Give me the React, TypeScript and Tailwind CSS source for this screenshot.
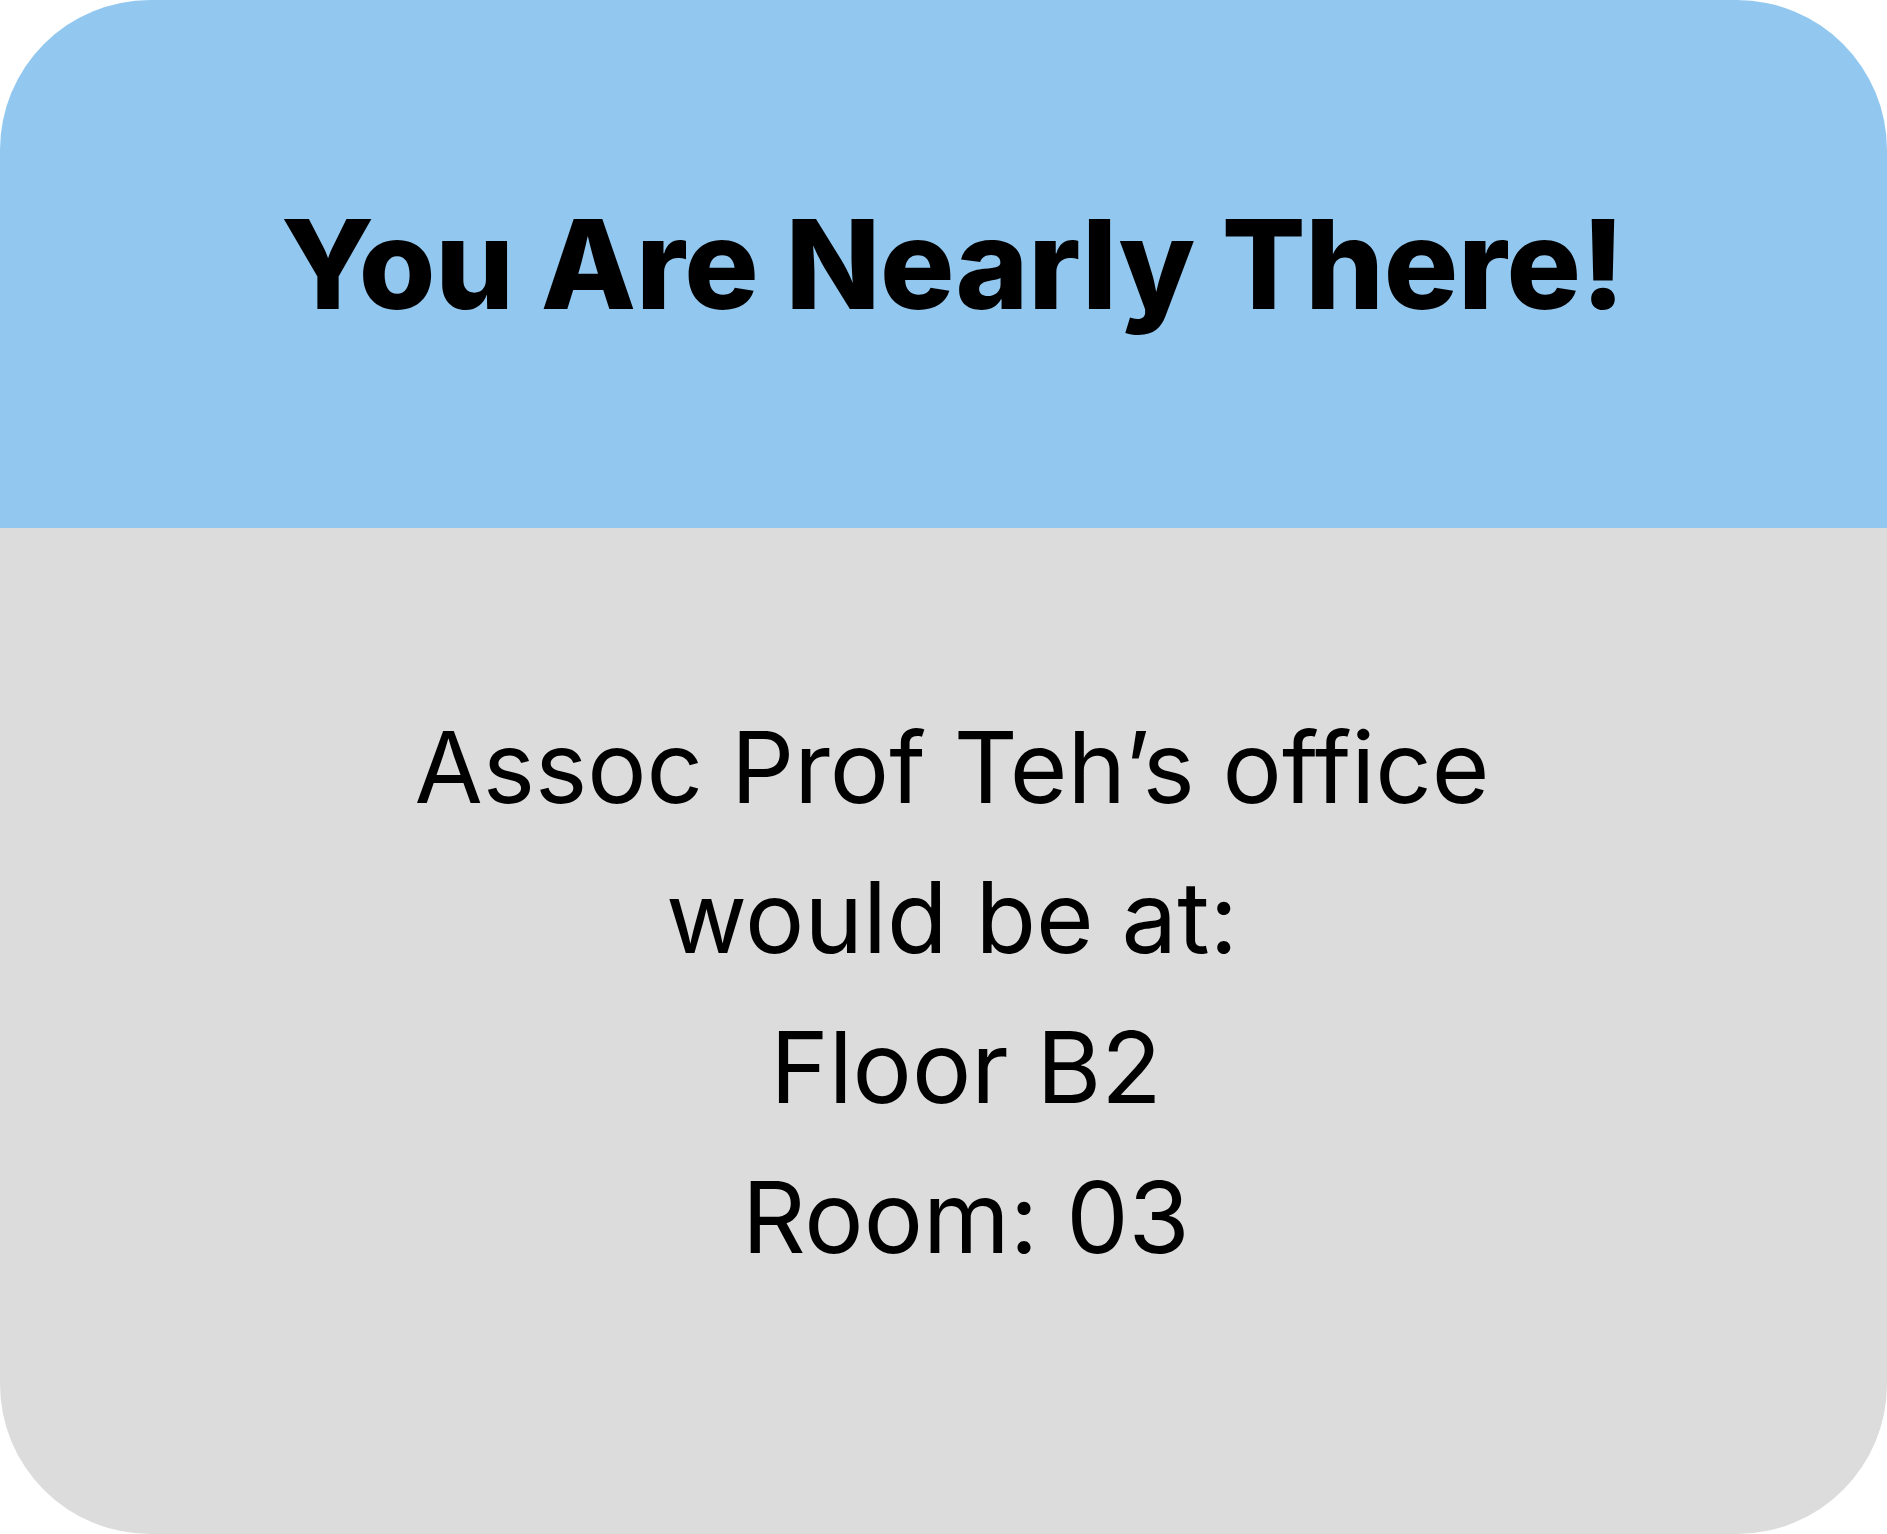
function App() {
  return (
    <div className="w-full h-[1534px] bg-white font-['Inter',sans-serif] text-black">
      <div className="flex flex-col h-full rounded-[150px] overflow-hidden">
        <header className="h-[528px] shrink-0 bg-[#92c8f0] flex items-center justify-center pl-[19px]">
          <h1 className="text-[124px] font-extrabold leading-none tracking-[-0.002em]">
            You Are Nearly There!
          </h1>
        </header>
        <section className="flex-1 bg-[#dcdcdc] flex justify-center pt-[164px] pl-[17px]">
          <p className="w-[1200px] text-center text-[99px] leading-[150px] font-normal">
            Assoc Prof Teh’s office would be at:
            <br />
            {"\u00a0"}Floor B2
            <br />
            {"\u00a0"}Room: 03
          </p>
        </section>
      </div>
    </div>
  );
}

export default App;
